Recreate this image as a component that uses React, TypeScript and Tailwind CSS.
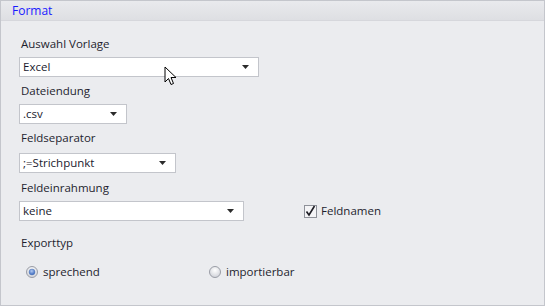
import React from 'react';

const font = { fontFamily: '"Open Sans", "Noto Sans", "DejaVu Sans", sans-serif' };

function Select({ value, width }: { value: string; width: string }) {
  return (
    <div
      className={`${width} flex h-[20px] items-center justify-between border border-[#c3c5cb] bg-white pr-[9px] pl-[3px] text-[11.5px] text-[#1a1a2e]`}
    >
      <span className="leading-none">{value}</span>
      <svg width="7" height="4" viewBox="0 0 7 4">
        <path d="M0 0h7L3.5 4z" fill="#2b2b2b" />
      </svg>
    </div>
  );
}

function Label({ children, className = '' }: { children: React.ReactNode; className?: string }) {
  return (
    <div className={`h-[16px] pl-[2px] text-[11.5px] leading-[16px] text-[#1e1e2e] ${className}`}>
      {children}
    </div>
  );
}

function Radio({ checked }: { checked?: boolean }) {
  return (
    <svg width="12" height="12" viewBox="0 0 12 12">
      <defs>
        <radialGradient id="rg" cx="50%" cy="35%" r="60%">
          <stop offset="0" stopColor="#ffffff" />
          <stop offset="1" stopColor="#d3d5db" />
        </radialGradient>
        <radialGradient id="dot" cx="45%" cy="35%" r="60%">
          <stop offset="0" stopColor="#b3cbf2" />
          <stop offset="1" stopColor="#3a68bd" />
        </radialGradient>
      </defs>
      <circle cx="6" cy="6" r="5.5" fill="url(#rg)" stroke="#9a9da6" />
      {checked && <circle cx="6" cy="6" r="3" fill="url(#dot)" stroke="#5d7fb9" strokeWidth="0.5" />}
    </svg>
  );
}

export default function App() {
  return (
    <div className="h-[307px] w-[546px] bg-white" style={font}>
      <div className="relative flex h-[306px] w-[545px] flex-col border border-[#c4c6cc] bg-[#ebecef]">
        <div className="flex h-[20px] items-center border-b border-[#d6d7dc] bg-gradient-to-b from-[#e9eaed] to-[#dedfe3] pl-[11px] text-[12px] text-[#1a1aff]">
          Format
        </div>
        <div className="flex flex-col pt-[15px] pl-[18px]">
          <Label>Auswahl Vorlage</Label>
          <div className="mt-[5px]">
            <Select value="Excel" width="w-[240px]" />
          </div>
          <Label className="mt-[6px]">Dateiendung</Label>
          <div className="mt-[5px]">
            <Select value=".csv" width="w-[108px]" />
          </div>
          <Label className="mt-[6px]">Feldseparator</Label>
          <div className="mt-[7px]">
            <Select value=";=Strichpunkt" width="w-[157px]" />
          </div>
          <Label className="mt-[7px]">Feldeinrahmung</Label>
          <div className="mt-[5px] flex items-center">
            <Select value="keine" width="w-[225px]" />
            <div className="ml-[60px] flex items-center gap-[4px] text-[11.5px] text-[#1e1e2e]">
              <svg width="13" height="13" viewBox="0 0 13 13">
                <rect x="0.5" y="0.5" width="12" height="12" fill="#f4f4f6" stroke="#8e9199" />
                <path d="M2.5 6.5l2.5 3.5 5.5-9" fill="none" stroke="#1d1d24" strokeWidth="1.6" />
              </svg>
              <span>Feldnamen</span>
            </div>
          </div>
          <Label className="mt-[14px]">Exporttyp</Label>
          <div className="mt-[12px] flex items-center text-[11.5px] text-[#1e1e2e]">
            <div className="ml-[7px] flex w-[183px] items-center gap-[5px]">
              <Radio checked />
              <span>sprechend</span>
            </div>
            <div className="flex items-center gap-[5px]">
              <Radio />
              <span>importierbar</span>
            </div>
          </div>
        </div>
        <svg className="absolute top-[65px] left-[163px]" width="14" height="22" viewBox="0 0 14 22">
          <path
            d="M1 1v15l3.5-3.5 2.5 6 2.5-1-2.5-6h5z"
            fill="#fff"
            stroke="#000"
            strokeWidth="1"
            strokeLinejoin="round"
          />
        </svg>
      </div>
    </div>
  );
}
